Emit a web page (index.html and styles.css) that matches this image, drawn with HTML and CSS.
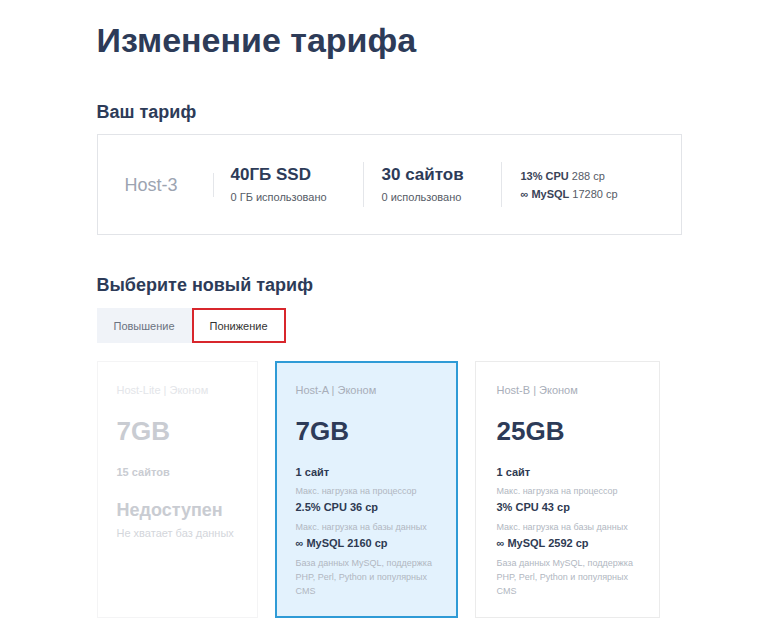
FILE: index.html
```html
<!DOCTYPE html>
<html lang="ru">
<head>
    <meta charset="UTF-8">
    <meta name="viewport" content="width=device-width, initial-scale=1.0">
    <title>Изменение тарифа</title>
    <link rel="stylesheet" href="styles.css">
</head>
<body>
    <div class="page">
        <h1>Изменение тарифа</h1>

        <!-- Current plan -->
        <h2>Ваш тариф</h2>
        <div class="current">
            <div class="current-col current-name">Host-3</div>
            <div class="current-col current-disk">
                <div class="big">40ГБ SSD</div>
                <div class="small">0 ГБ использовано</div>
            </div>
            <div class="current-col current-sites">
                <div class="big">30 сайтов</div>
                <div class="small">0 использовано</div>
            </div>
            <div class="current-col current-load">
                <div><b>13% CPU</b> 288 ср</div>
                <div><b>∞ MySQL</b> 17280 ср</div>
            </div>
        </div>

        <!-- New plan -->
        <h2 class="choose-title">Выберите новый тариф</h2>
        <div class="tabs">
            <div class="tab">Повышение</div>
            <div class="tab tab-active">Понижение</div>
        </div>

        <div class="plans">
            <div class="plan plan-disabled">
                <div class="plan-label">Host-Lite | Эконом</div>
                <div class="plan-size">7GB</div>
                <div class="plan-sites">15 сайтов</div>
                <div class="plan-unavailable">Недоступен</div>
                <div class="plan-reason">Не хватает баз данных</div>
            </div>
            <div class="plan plan-selected">
                <div class="plan-label">Host-A | Эконом</div>
                <div class="plan-size">7GB</div>
                <div class="plan-sites">1 сайт</div>
                <div class="plan-hint">Макс. нагрузка на процессор</div>
                <div class="plan-value">2.5% CPU 36 ср</div>
                <div class="plan-hint">Макс. нагрузка на базы данных</div>
                <div class="plan-value">∞ MySQL 2160 ср</div>
                <div class="plan-desc">База данных MySQL, поддержка PHP, Perl, Python и популярных CMS</div>
            </div>
            <div class="plan">
                <div class="plan-label">Host-B | Эконом</div>
                <div class="plan-size">25GB</div>
                <div class="plan-sites">1 сайт</div>
                <div class="plan-hint">Макс. нагрузка на процессор</div>
                <div class="plan-value">3% CPU 43 ср</div>
                <div class="plan-hint">Макс. нагрузка на базы данных</div>
                <div class="plan-value">∞ MySQL 2592 ср</div>
                <div class="plan-desc">База данных MySQL, поддержка PHP, Perl, Python и популярных CMS</div>
            </div>
        </div>
    </div>
</body>
</html>
```

FILE: styles.css
```css
body {
    font-family: "Liberation Sans", Arial, sans-serif;
    margin: 0;
    padding: 0;
    background: #fff;
    color: #2e3a52;
}

.page {
    width: 585px;
    margin: 0 auto;
    padding-top: 19px;
}

h1 {
    margin: 0;
    font-size: 34px;
    line-height: 42px;
    color: #2d3b58;
}

h2 {
    margin: 40px 0 0;
    font-size: 18px;
    line-height: 22px;
    color: #2d3b58;
}

/* current plan box */
.current {
    display: flex;
    align-items: center;
    height: 99px;
    margin-top: 11px;
    padding-left: 27px;
    border: 1px solid #e2e4e8;
}

.current-col {
    box-sizing: border-box;
    border-right: 1px solid #e4e6ea;
}

.current-name {
    width: 89px;
    font-size: 18px;
    line-height: 24px;
    color: #9ca4b1;
}

.current-disk {
    width: 150px;
    padding-left: 17px;
}

.current-sites {
    width: 138px;
    padding-left: 18px;
}

.current-load {
    padding-left: 19px;
    border-right: none;
    font-size: 11px;
    line-height: 18px;
    color: #555b66;
}

.current-load b {
    color: #3a4357;
}

.big {
    font-size: 17px;
    line-height: 25px;
    font-weight: bold;
    color: #2d3b58;
}

.small {
    font-size: 11px;
    line-height: 20px;
    color: #555b66;
}

/* tabs */
.choose-title {
    margin-top: 39px;
}

.tabs {
    display: flex;
    margin-top: 12px;
}

.tab {
    width: 95px;
    height: 35px;
    display: flex;
    align-items: center;
    justify-content: center;
    font-size: 11px;
    color: #6b7280;
    background: #f0f3f8;
    box-sizing: border-box;
}

.tab-active {
    width: 94px;
    color: #333;
    background: #fff;
    border: 2px solid #d8262c;
}

/* plan cards */
.plans {
    display: grid;
    grid-template-columns: 161px 183px 185px;
    gap: 17px;
    margin-top: 18px;
}

.plan {
    height: 257px;
    padding: 21px 10px 0 21px;
    border: 1px solid #ebebeb;
    box-sizing: border-box;
}

.plan-label {
    font-size: 11px;
    line-height: 14px;
    color: #a8aeb9;
}

.plan-size {
    margin-top: 19px;
    font-size: 26px;
    line-height: 30px;
    font-weight: bold;
    color: #2d3b58;
}

.plan-sites {
    margin-top: 19px;
    font-size: 11px;
    line-height: 14px;
    font-weight: bold;
}

.plan-hint {
    margin-top: 6px;
    font-size: 9px;
    line-height: 13px;
    color: #b1b7c1;
}

.plan-value {
    margin-top: 2px;
    font-size: 11px;
    line-height: 15px;
    font-weight: bold;
}

.plan-desc {
    margin-top: 5px;
    font-size: 9px;
    line-height: 14px;
    color: #b1b7c1;
}

.plan-selected {
    padding: 20px 12px 0 19px;
    background: #e3f2fd;
    border: 2px solid #2f9bd6;
}

.plan-disabled {
    padding-left: 19px;
    border-color: #f4f4f5;
}

.plan-disabled .plan-label {
    color: #e3e5e9;
}

.plan-disabled .plan-size,
.plan-disabled .plan-sites {
    color: #c9ccd2;
}

.plan-disabled .plan-unavailable {
    margin-top: 20px;
    font-size: 18px;
    line-height: 22px;
    font-weight: bold;
    color: #c9ccd2;
}

.plan-disabled .plan-reason {
    margin-top: 5px;
    font-size: 11px;
    line-height: 14px;
    white-space: nowrap;
    color: #d3d6db;
}
```
